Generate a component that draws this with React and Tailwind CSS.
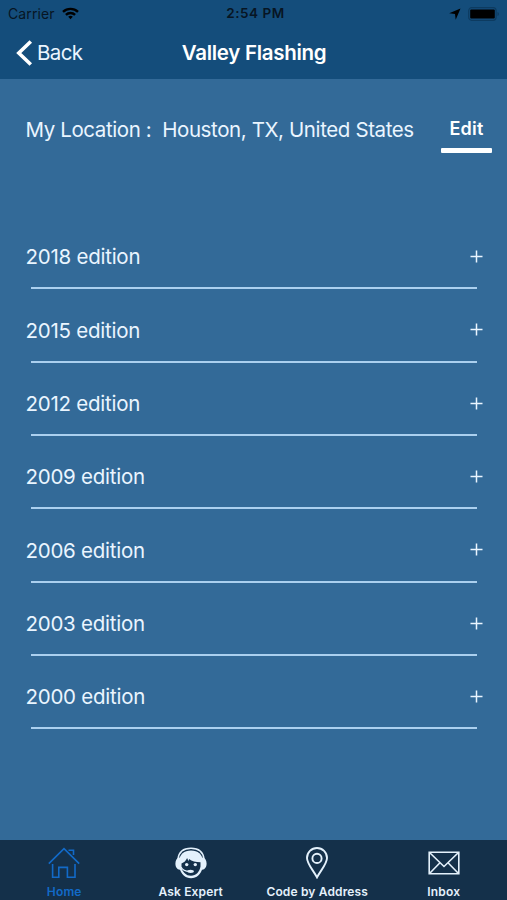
import React, { useState } from 'react';

const editions = [2018, 2015, 2012, 2009, 2006, 2003, 2000];

const HomeIcon = () => (
  <svg width="32" height="32" viewBox="0 0 32 32" fill="none" stroke="currentColor" strokeWidth="1.6">
    <path d="M.8 16.6 16 1.7l15.2 14.9" />
    <path d="M4.600 17v13.200h6.200V20.400h8.600v9.800h7.600V17" />
    <path d="M20.500 3.200h5V8" />
  </svg>
);

const ExpertIcon = () => (
  <svg width="32" height="32" viewBox="0 0 32 32" fill="none">
    <path d="M3 12C3.800 5 8.800 1.200 16 1.200S28.200 5 29 12" stroke="currentColor" strokeWidth="1.600" />
    <path d="M4.500 13C4.500 7.500 9 3.400 16 3.400S27.500 7.500 27.500 13v8c-1.500 6.500-6 10.200-11.500 10.200S6 27.500 4.500 21z" fill="currentColor" />
    <path d="M5.500 10.500H4.800C2 10.800.4 13 .4 16.500s1.600 6 4.400 6.200h.7zM26.500 10.500h.7c2.800.3 4.400 2.500 4.400 6s-1.600 6-4.400 6.200h-.7z" fill="currentColor" />
    <path d="M6.500 16.500c2.600-1 4.500-2.800 5.600-5.500.4 1.200 1 2.200 1.800 3l.1-2c3 2.300 6.500 3.200 11.500 3.200v4.300c-1 5.500-4.500 9.300-9.500 9.300S7.500 25 6.500 20.500z" fill="#14304a" />
    <circle cx="11.700" cy="17.600" r="1.700" fill="currentColor" />
    <circle cx="20.300" cy="17.600" r="1.700" fill="currentColor" />
    <path d="M6 20c1.500 3.200 4.500 4.300 8.500 4.300" stroke="currentColor" strokeWidth="1.300" />
    <ellipse cx="15.600" cy="24.300" rx="3.300" ry="1.600" fill="currentColor" />
  </svg>
);

const PinIcon = () => (
  <svg width="32" height="32" viewBox="0 0 32 32" fill="none" stroke="currentColor" strokeWidth="1.900">
    <path d="M16 30.400C12.500 23.500 6 17 6 11a10 10 0 0 1 20 0c0 6-6.500 12.500-10 19.400z" />
    <circle cx="16" cy="11.400" r="4.600" />
  </svg>
);

const MailIcon = () => (
  <svg width="32" height="32" viewBox="0 0 32 32" fill="none" stroke="currentColor" strokeWidth="1.600">
    <path d="M1.200 5.200h29.600v21.600H1.200z" />
    <path d="M1.500 5.500 16 19.500l14.500-14M1.500 26.500 12 15.800M30.500 26.500 20 15.800" />
  </svg>
);

const tabs = [
  { name: 'Home', Icon: HomeIcon },
  { name: 'Ask Expert', Icon: ExpertIcon },
  { name: 'Code by Address', Icon: PinIcon },
  { name: 'Inbox', Icon: MailIcon }
];

const StatusBar = () => (
  <div className="grid h-[27px] grid-cols-3 items-center pl-2 pr-[7px] text-[#071523]">
    <div className="flex items-center gap-[7px]">
      <span className="text-[14px] tracking-[0.1px]">Carrier</span>
      <svg width="17" height="13" viewBox="0 0 17 13" fill="none" stroke="#000" strokeWidth="2.400">
        <path d="M1 4.800a11 11 0 0 1 15 0M3.900 7.900a6.700 6.700 0 0 1 9.200 0" />
        <path d="m8.500 12.300-2.300-2.500a3.400 3.400 0 0 1 4.600 0z" fill="#000" stroke="none" />
      </svg>
    </div>
    <span className="pl-[3px] text-center text-[13.5px] font-semibold tracking-[0.5px]">2:54 PM</span>
    <div className="flex items-center justify-end gap-[7px]">
      <svg width="12" height="12" viewBox="0 0 12 12" fill="#000">
        <path d="M11.500.5.2 5.200l5.800.8.700 5.700z" />
      </svg>
      <svg width="32" height="14" viewBox="0 0 32 14">
        <rect x=".7" y=".7" width="27.400" height="12.600" rx="3" fill="none" stroke="#0d3b60" strokeWidth="1.200" />
        <rect x="2.200" y="2.500" width="24.600" height="9" rx="1" fill="#000" />
        <path d="M29.500 5v4c2-.7 2-3.300 0-4z" fill="#0d3b60" />
      </svg>
    </div>
  </div>
);

const App = () => {
  const [activeTab, setActiveTab] = useState('Home');

  return (
    <div className="flex h-[900px] w-full flex-col bg-[#336a98] font-['Inter',sans-serif] text-[#eaf5ff]">
      <header className="h-[79px] bg-[#144d7b]">
        <StatusBar />
        <div className="grid h-[51px] grid-cols-3 items-center">
          <button className="flex items-center gap-1 pl-4 text-[20.5px] tracking-[-0.6px]">
            <svg width="17" height="26" viewBox="0 0 17 26" fill="none" stroke="#fff" strokeWidth="3.600">
              <path d="M14.800 1.500 2.800 13l12 11.500" />
            </svg>
            <span className="pt-[2px]">Back</span>
          </button>
          <h1 className="whitespace-nowrap pl-px pt-[2px] text-center text-[20.5px] font-semibold tracking-[-0.3px] text-white">
            Valley Flashing
          </h1>
        </div>
      </header>

      <main className="flex-1">
        <div className="flex h-[100px] justify-between pl-[25.5px] pr-[15px]">
          <p className="whitespace-pre pt-9 text-[20.5px] leading-[29px] tracking-[-0.39px] [font-feature-settings:'calt'_0]">
            My Location :  Houston, TX, United States
          </p>
          <button className="mt-9 h-[38px] w-[51px] text-[18px] font-semibold leading-[25px] tracking-[0.2px] text-white">
            Edit
            <div className="mt-[7px] h-[5px] rounded-[1px] bg-white" />
          </button>
        </div>

        <ul className="pt-[37px]">
          {editions.map((year) => (
            <li key={year} className="flex h-[73.330px] flex-col">
              <div className="flex flex-1 items-center justify-between pl-[25.5px] pr-6 pt-[10px]">
                <span className="pt-[2px] text-[20.5px] tracking-[-0.25px]">{year} edition</span>
                <svg width="13" height="13" viewBox="0 0 13 13" stroke="currentColor" strokeWidth="1.500">
                  <path d="M.5 6.500h12M6.500.5v12" />
                </svg>
              </div>
              <div className="ml-[31px] mr-[30px] h-[2px] bg-[#abd0ef]" />
            </li>
          ))}
        </ul>
      </main>

      <nav className="grid h-[60px] grid-cols-4 bg-[#14304a] pl-px">
        {tabs.map(({ name, Icon }) => (
          <button
            key={name}
            onClick={() => setActiveTab(name)}
            className={`flex flex-col items-center pt-[7px] ${activeTab === name ? 'text-[#126ac8]' : 'text-[#e4f1fc]'}`}
          >
            <Icon />
            <span className="mt-[5px] whitespace-nowrap text-[12px] font-semibold leading-[15px] tracking-[0.15px]">
              {name}
            </span>
          </button>
        ))}
      </nav>
    </div>
  );
};

export default App;
